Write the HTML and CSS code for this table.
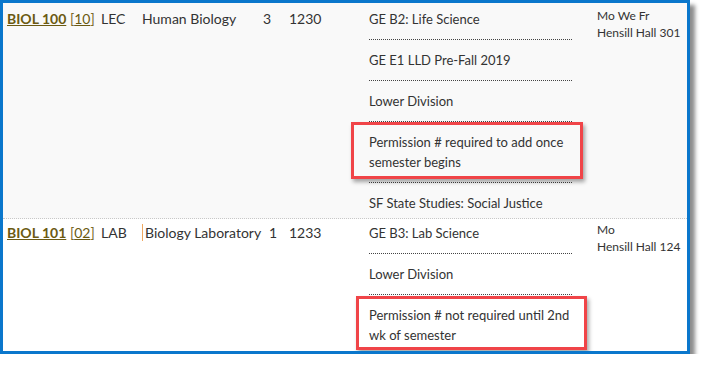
FILE: index.html
```html
<!DOCTYPE html>
<html>
<head>
<meta charset="utf-8">
<link rel="stylesheet" href="styles.css">
</head>
<body>
<div class="frame">
  <div class="row row-alt">
    <div class="c c-course"><a class="course" href="#">BIOL 100</a> [<a class="sec" href="#">10</a>]</div>
    <div class="c">LEC</div>
    <div class="c">Human Biology</div>
    <div class="c">3</div>
    <div class="c">1230</div>
    <ul class="c ge">
      <li>GE B2: Life Science</li>
      <li>GE E1 LLD Pre-Fall 2019</li>
      <li>Lower Division</li>
      <li class="note">Permission # required to add once semester begins<span class="mark mark-a"></span></li>
      <li>SF State Studies: Social Justice</li>
    </ul>
    <div class="c when">Mo We Fr<br>Hensill Hall 301</div>
  </div>
  <div class="row row-b">
    <div class="c c-course"><a class="course" href="#">BIOL 101</a> [<a class="sec" href="#">02</a>]</div>
    <div class="c">LAB</div>
    <div class="c"><span class="caret">Biology Laboratory</span></div>
    <div class="c c-units">1</div>
    <div class="c">1233</div>
    <ul class="c ge">
      <li>GE B3: Lab Science</li>
      <li>Lower Division</li>
      <li class="note">Permission # not required until 2nd wk of semester<span class="mark mark-b"></span></li>
    </ul>
    <div class="c when">Mo<br>Hensill Hall 124</div>
  </div>
</div>
</body>
</html>
```

FILE: styles.css
```css
html, body {
  margin: 0;
  padding: 0;
  background: #ffffff;
}
body {
  font-family: Lato, "Open Sans", sans-serif;
  font-size: 14px;
  color: #333333;
}
.frame {
  width: 684px;
  height: 348px;
  border: 3px solid #0a77cc;
  background: #ffffff;
  overflow: hidden;
  box-shadow: 5px 5px 4px rgba(0, 0, 0, 0.45);
}
.row {
  display: grid;
  grid-template-columns: 94px 41px 121px 26px 80px 228px 1fr;
  padding: 6px 0 0 4px;
  line-height: 20px;
}
.row-alt {
  background: #f9f9f9;
  border-bottom: 1px dotted #c8c8c8;
}
.row-b {
  padding-top: 4px;
}
.c {
  white-space: nowrap;
}
.c-units {
  padding-left: 6px;
}
.course {
  color: #6b5a12;
  font-weight: bold;
  text-decoration: underline;
}
.c-course {
  color: #7a6a28;
}
.sec {
  color: #6b5a12;
  text-decoration: underline;
}
.caret {
  border-left: 1px solid #f0a860;
  padding-left: 2px;
}
.ge {
  list-style: none;
  margin: 0;
  padding: 0 25px 0 0;
  white-space: normal;
  font-size: 13px;
}
.ge li {
  position: relative;
  padding: 10px 0;
  border-bottom: 1px dotted #444444;
}
.ge li:first-child {
  padding-top: 0;
}
.ge li:last-child {
  border-bottom: none;
  padding-bottom: 5px;
}
.when {
  font-size: 12px;
  line-height: 17px;
  margin-top: -2px;
}
.mark {
  position: absolute;
  border: 3px solid #f04448;
  box-shadow: 2px 3px 4px rgba(0, 0, 0, 0.35);
}
.mark-a {
  top: 0;
  bottom: 3px;
  left: -18px;
  right: -11px;
}
.mark-b {
  top: 1px;
  bottom: 0;
  left: -13px;
  right: -15px;
}
```
